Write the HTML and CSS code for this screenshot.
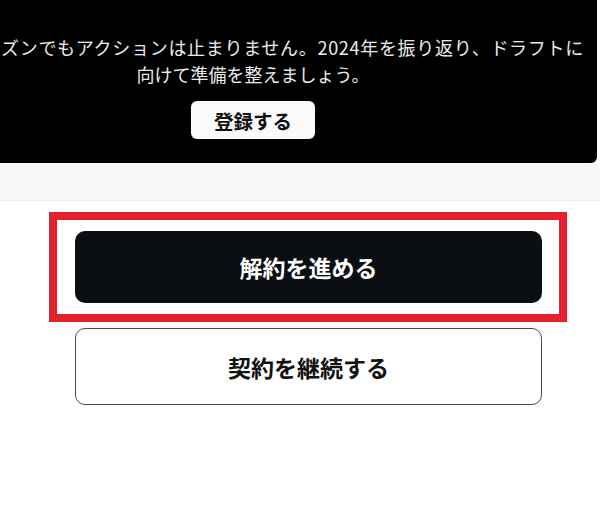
FILE: index.html
```html
<!DOCTYPE html>
<html lang="ja">
<head>
<meta charset="utf-8">
<link rel="stylesheet" href="styles.css">
</head>
<body>
<div class="banner">
  <p class="banner-line first">ズンでもアクションは止まりません。2024年を振り返り、ドラフトに</p>
  <div class="banner-center">
    <p class="banner-line">向けて準備を整えましょう。</p>
    <button class="register">登録する</button>
  </div>
</div>
<div class="strip"></div>
<main class="actions">
  <div class="highlight">
    <button class="btn btn-primary">解約を進める</button>
  </div>
  <button class="btn btn-secondary">契約を継続する</button>
</main>
</body>
</html>
```
FILE: styles.css
```css
* { box-sizing: border-box; }
html, body { margin: 0; padding: 0; }
body {
  width: 600px;
  height: 507px;
  overflow: hidden;
  background: #ffffff;
  font-family: "Noto Sans CJK JP", "Noto Sans", sans-serif;
}
.banner {
  width: 597px;
  height: 163px;
  background: #000;
  border-bottom-right-radius: 6px;
  padding-top: 34px;
}
.banner-line {
  margin: 0;
  color: #ececec;
  font-size: 18px;
  line-height: 27px;
  white-space: nowrap;
}
.banner-line.first {
  padding-left: 1px;
  letter-spacing: 0.7px;
}
.banner-center {
  width: 506px;
  display: flex;
  flex-direction: column;
  align-items: center;
}
.register {
  margin-top: 13px;
  width: 124px;
  height: 38px;
  border: none;
  border-radius: 6px;
  background: #fafafa;
  color: #111;
  font-family: inherit;
  font-size: 19.5px;
  font-weight: 700;
  padding: 0;
}
.strip {
  height: 38px;
  background: #f8f8f8;
  border-bottom: 1px solid #ececec;
}
.actions {
  display: flex;
  flex-direction: column;
  align-items: flex-start;
  padding-top: 11px;
  padding-left: 49px;
}
.highlight {
  width: 518px;
  border: 8px solid #e3202b;
  padding: 11px 17px 11px 18px;
}
.btn {
  width: 467px;
  border-radius: 10px;
  font-family: inherit;
  font-size: 23px;
  font-weight: 700;
  padding: 0;
}
.btn-primary {
  height: 72px;
  background: #0b0f13;
  color: #fff;
  border: none;
  display: block;
}
.btn-secondary {
  margin-top: 6px;
  margin-left: 26px;
  height: 77px;
  background: #fff;
  color: #111;
  border: 1.5px solid #4a4a4a;
}
```
